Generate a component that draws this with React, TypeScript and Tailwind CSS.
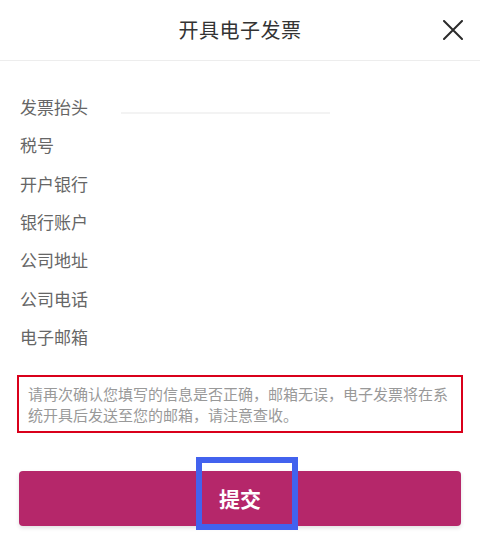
import React from "react";

const labels = ["发票抬头", "税号", "开户银行", "银行账户", "公司地址", "公司电话", "电子邮箱"];

export default function App() {
  return (
    <div
      className="w-[480px] h-[560px] bg-white overflow-hidden"
      style={{ fontFamily: '"Noto Sans CJK SC", "Noto Sans", sans-serif' }}
    >
      {/* Header */}
      <div className="h-[61px] border-b border-[#ededed] grid grid-cols-[1fr_auto_1fr] items-center">
        <div />
        <span className="text-[20px] leading-none text-[#333333] tracking-[0.5px]">开具电子发票</span>
        <div className="flex justify-end pr-[17px]">
          <button className="w-[20px] h-[20px] flex items-center justify-center">
            <svg width="20" height="20" viewBox="0 0 20 20" fill="none">
              <path d="M1 1L19 19M19 1L1 19" stroke="#2b2b2b" strokeWidth="2" strokeLinecap="round" />
            </svg>
          </button>
        </div>
      </div>

      {/* Fields */}
      <div className="pt-[26.5px] px-[20px] flex flex-col">
        {labels.map((l, i) => (
          <div key={l} className="h-[38.33px] flex items-center">
            <span className="text-[17px] leading-none text-[#666666] w-[68px]">{l}</span>
            {i === 0 && <div className="ml-[33px] mt-[13px] w-[209px] h-[2px] bg-[#f3f3f3]" />}
          </div>
        ))}
      </div>

      {/* Notice */}
      <div className="mt-[19px] mx-[17px] border-2 border-[#d9001b] py-[6px] px-[9px]">
        <p className="text-[15px] leading-[21px] text-[#999999]">
          请再次确认您填写的信息是否正确，邮箱无误，电子发票将在系统开具后发送至您的邮箱，请注意查收。
        </p>
      </div>

      {/* Submit */}
      <div className="relative mt-[38px] mx-[19px]">
        <button className="w-full h-[55px] rounded-[4px] bg-[#b5276a] shadow-[0_2px_4px_rgba(0,0,0,0.12)] flex items-center justify-center">
          <span className="text-[21px] font-bold text-white leading-none">提交</span>
        </button>
        <div className="absolute left-[177px] top-[-14px] w-[102px] h-[73px] border-[6px] border-[#4262ee] pointer-events-none" />
      </div>
    </div>
  );
}
